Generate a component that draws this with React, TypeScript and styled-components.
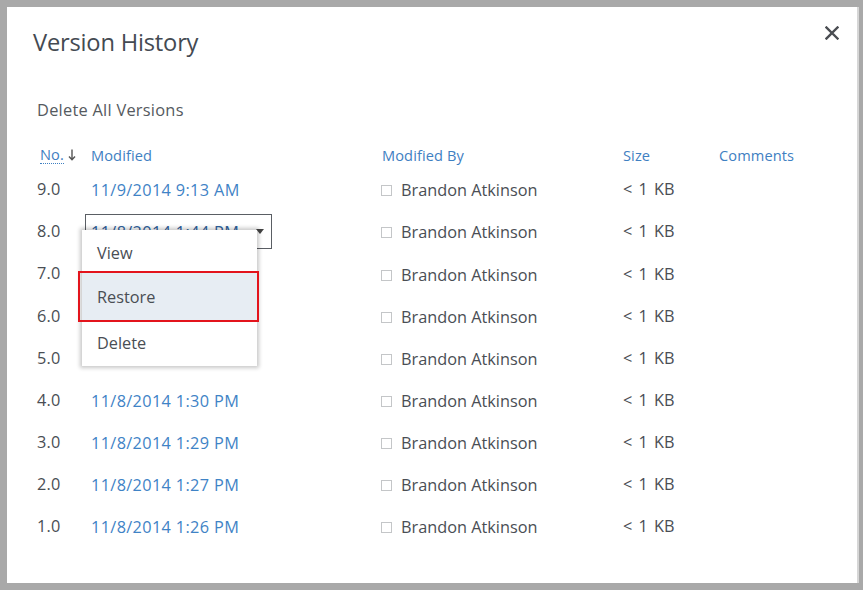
import React from "react";
import styled, { createGlobalStyle } from "styled-components";

const Global = createGlobalStyle`
  html, body { margin: 0; padding: 0; }
  body {
    width: 863px; height: 590px; overflow: hidden;
    background: #a9a9a9;
    font-family: "Open Sans", "Noto Sans", sans-serif;
  }
`;

const Frame = styled.div`
  width: 863px;
  height: 590px;
  box-sizing: border-box;
  padding: 7px 4px 7px 7px;
  display: flex;
`;

const Dialog = styled.div`
  flex: 1;
  background: #fff;
  border-right: 2px solid #d6d6d6;
  position: relative;
  display: flex;
  flex-direction: column;
  padding: 20px 0 0 26px;
  box-sizing: border-box;
`;

const Title = styled.h1`
  margin: 0;
  font-size: 23.7px;
  font-weight: 400;
  color: #444a52;
  line-height: 30px;
  letter-spacing: -0.2px;
`;

const Close = styled.button`
  position: absolute;
  top: 14px;
  right: 13px;
  width: 24px;
  height: 24px;
  border: 0;
  padding: 0;
  background: transparent;
  display: flex;
  align-items: center;
  justify-content: center;
`;

const DeleteAll = styled.div`
  margin: 42px 0 0 4px;
  font-size: 16.4px;
  letter-spacing: 0.25px;
  color: #555a60;
  line-height: 22px;
`;

const cols = "54px 291px 241px 96px 1fr";

const HeaderRow = styled.div`
  display: grid;
  grid-template-columns: ${cols};
  margin: 22px 0 2px 4px;
  height: 24px;
  align-items: center;
  font-size: 14.6px;
  letter-spacing: 0.1px;
  color: #3f80c2;
`;

const HeadCell = styled.div`
  display: flex;
  align-items: center;
  gap: 4px;
`;

const SortLabel = styled.span`
  border-bottom: 1px dotted #3f80c2;
  line-height: 17px;
  margin-left: 3px;
`;

const Row = styled.div<{ $h: number }>`
  display: grid;
  grid-template-columns: ${cols};
  margin-left: 4px;
  height: ${(p) => p.$h}px;
  align-items: center;
  font-size: 16.3px;
  color: #4a4e54;
`;

const Num = styled.div`
  margin-top: -3px;
  letter-spacing: 0.2px;
`;

const DateCell = styled.div`
  position: relative;
  color: #3f83c6;
  white-space: nowrap;
  letter-spacing: 0.35px;
`;

const SelectedBox = styled.div`
  position: absolute;
  left: -6px;
  top: -18px;
  width: 187px;
  height: 35px;
  box-sizing: border-box;
  border: 1px solid #5a5e64;
  display: flex;
  align-items: center;
  padding-left: 5px;
  color: #2e5f9c;
  background: #fff;
`;

const Caret = styled.span`
  position: absolute;
  right: 7px;
  top: 14px;
  width: 0;
  height: 0;
  border-left: 4px solid transparent;
  border-right: 4px solid transparent;
  border-top: 5px solid #444;
`;

const Menu = styled.div`
  position: absolute;
  left: -9px;
  top: -2px;
  width: 175px;
  background: #fff;
  box-shadow: 0 0 4px 2px rgba(0, 0, 0, 0.22);
  padding: 3px 0 1px;
  z-index: 5;
  letter-spacing: 0;
`;

const MenuItem = styled.div<{ $h: number; $active?: boolean }>`
  position: relative;
  height: ${(p) => p.$h}px;
  display: flex;
  align-items: center;
  padding-left: 15px;
  font-size: 16.3px;
  color: #4a4e54;
  background: ${(p) => (p.$active ? "#e7edf3" : "transparent")};
  ${(p) =>
    p.$active &&
    `&::after {
      content: "";
      position: absolute;
      left: -4px; right: -2px; top: -2px; bottom: -1px;
      border: 2.5px solid #e3141c;
    }`}
`;

const ByCell = styled.div`
  display: flex;
  align-items: center;
  gap: 9px;
  margin-left: -1px;
`;

const Check = styled.span`
  width: 11px;
  height: 11px;
  box-sizing: border-box;
  border: 1px solid #c4c6c8;
  display: inline-block;
  margin-top: 1px;
`;

const SizeCell = styled.div`
  margin-top: -2px;
  word-spacing: 2px;
`;

const rows = [
  { no: "9.0", date: "11/9/2014 9:13 AM", h: 42 },
  { no: "8.0", date: "11/8/2014 1:44 PM", h: 42 },
  { no: "7.0", date: "", h: 43 },
  { no: "6.0", date: "", h: 42 },
  { no: "5.0", date: "", h: 42 },
  { no: "4.0", date: "11/8/2014 1:30 PM", h: 42 },
  { no: "3.0", date: "11/8/2014 1:29 PM", h: 42 },
  { no: "2.0", date: "11/8/2014 1:27 PM", h: 42 },
  { no: "1.0", date: "11/8/2014 1:26 PM", h: 42 },
];

export default function App() {
  return (
    <>
      <Global />
      <Frame>
        <Dialog>
          <Title>Version History</Title>
          <Close aria-label="Close">
            <svg width="14" height="14" viewBox="0 0 14 14">
              <path d="M1.5 1.5 L12.5 12.5 M12.5 1.5 L1.5 12.5" stroke="#4a4d52" strokeWidth="2.4" strokeLinecap="square" />
            </svg>
          </Close>
          <DeleteAll>Delete All Versions</DeleteAll>
          <HeaderRow>
            <HeadCell>
              <SortLabel>No.</SortLabel>
              <svg width="8" height="12" viewBox="0 0 8 12">
                <path d="M4 0.5 V10.5 M1 7.5 L4 10.8 L7 7.5" stroke="#555" strokeWidth="1.4" fill="none" />
              </svg>
            </HeadCell>
            <HeadCell>Modified</HeadCell>
            <HeadCell>Modified By</HeadCell>
            <HeadCell>Size</HeadCell>
            <HeadCell>Comments</HeadCell>
          </HeaderRow>
          {rows.map((r, i) => (
            <Row key={r.no} $h={r.h}>
              <Num>{r.no}</Num>
              <DateCell>
                {i === 1 ? (
                  <>
                    <SelectedBox>
                      {r.date}
                      <Caret />
                    </SelectedBox>
                    <Menu>
                      <MenuItem $h={40}>View</MenuItem>
                      <MenuItem $h={48} $active>
                        Restore
                      </MenuItem>
                      <MenuItem $h={44}>Delete</MenuItem>
                    </Menu>
                  </>
                ) : (
                  r.date
                )}
              </DateCell>
              <ByCell>
                <Check />
                Brandon Atkinson
              </ByCell>
              <SizeCell>&lt; 1 KB</SizeCell>
              <div />
            </Row>
          ))}
        </Dialog>
      </Frame>
    </>
  );
}
